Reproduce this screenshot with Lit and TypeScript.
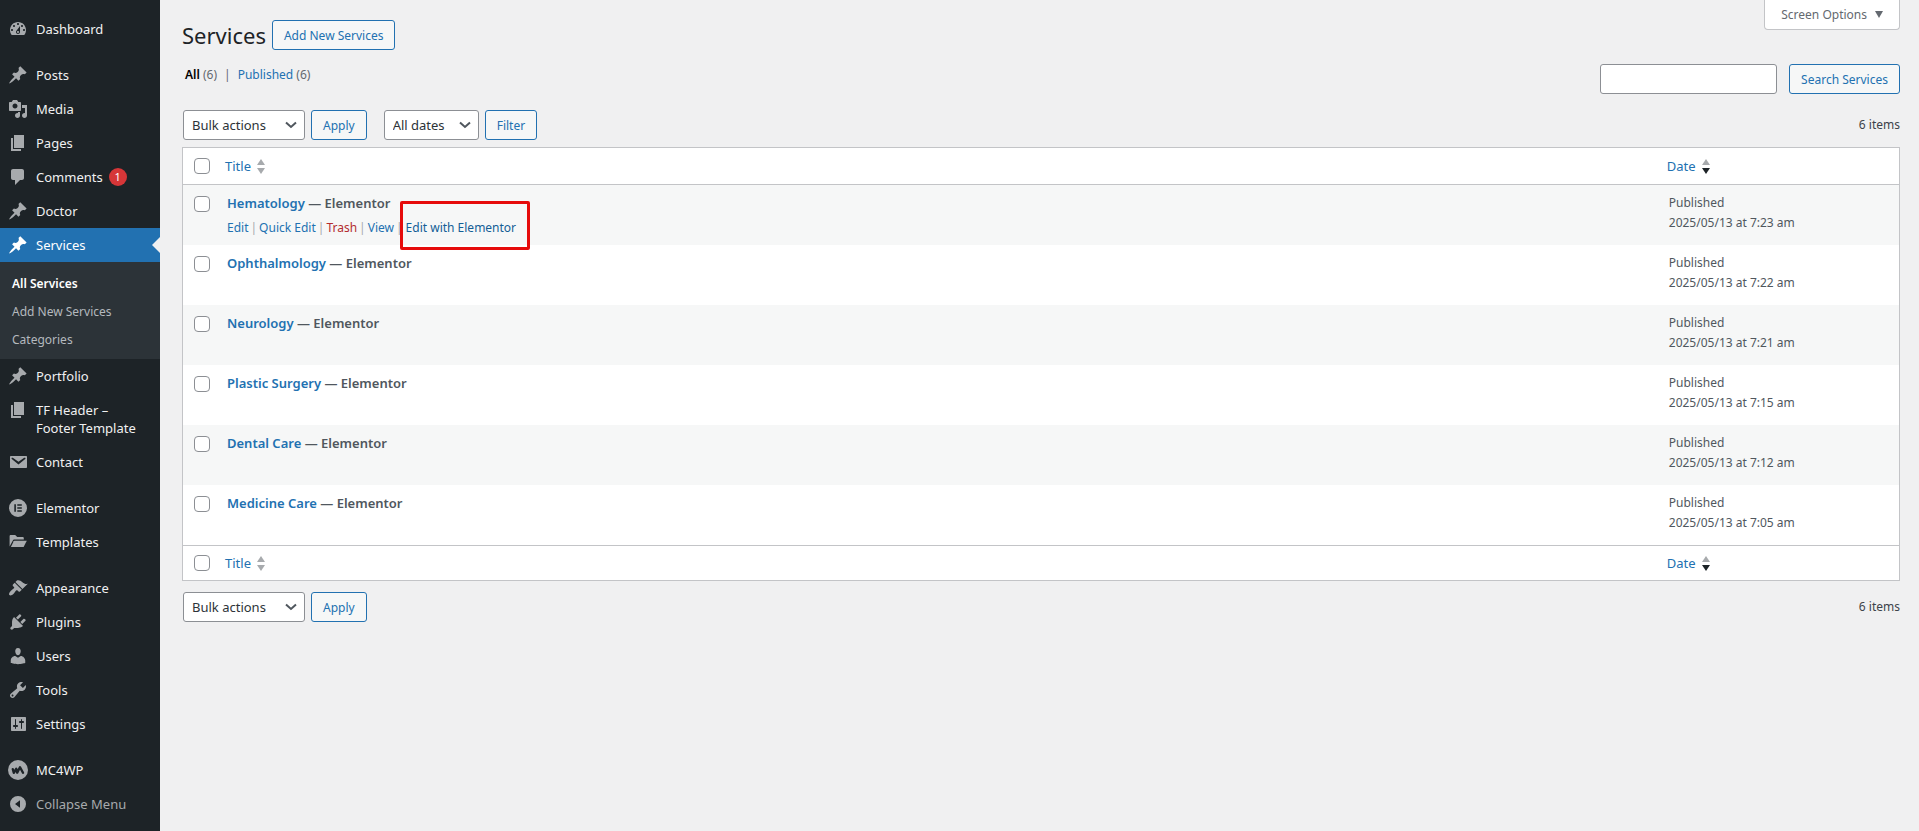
import { LitElement, html, svg, css, nothing } from "lit";
import { customElement } from "lit/decorators.js";
import { classMap } from "lit/directives/class-map.js";

const icons: Record<string, unknown> = {
  dashboard: svg`<path fill-rule="evenodd" d="M3.76 16h12.48c1.1-1.37 1.76-3.11 1.76-5 0-4.42-3.58-8-8-8s-8 3.58-8 8c0 1.89.66 3.63 1.76 5zM10 4c.55 0 1 .45 1 1s-.45 1-1 1-1-.45-1-1 .45-1 1-1zM6 6c.55 0 1 .45 1 1s-.45 1-1 1-1-.45-1-1 .45-1 1-1zm8 0c.55 0 1 .45 1 1s-.45 1-1 1-1-.45-1-1 .45-1 1-1zm-5.37 5.55L12 7v6c0 1.1-.9 2-2 2s-2-.9-2-2c0-.57.24-1.08.63-1.45zM4 10c.55 0 1 .45 1 1s-.45 1-1 1-1-.45-1-1 .45-1 1-1zm12 0c.55 0 1 .45 1 1s-.45 1-1 1-1-.45-1-1 .45-1 1-1zm-5 3c0-.55-.45-1-1-1s-1 .45-1 1 .45 1 1 1 1-.45 1-1z"/>`,
  pin: svg`<path d="M10.44 3.02l1.82-1.82 6.36 6.35-1.83 1.82c-1.05-.68-2.48-.57-3.41.36l-.75.75c-.92.93-1.04 2.35-.35 3.41l-1.83 1.82-2.41-2.41-2.8 2.79c-.42.42-3.38 2.71-3.8 2.29s1.86-3.39 2.28-3.81l2.79-2.79L4.1 9.36l1.83-1.82c1.05.69 2.48.57 3.4-.36l.75-.75c.93-.92 1.05-2.35.36-3.41z"/>`,
  media: svg`<path fill-rule="evenodd" d="M13 11V4c0-.55-.45-1-1-1h-1.67L9 1H5L3.67 3H2c-.55 0-1 .45-1 1v7c0 .55.45 1 1 1h10c.55 0 1-.45 1-1zM7 4.5c1.38 0 2.5 1.12 2.5 2.5S8.38 9.5 7 9.5 4.5 8.38 4.5 7 5.62 4.5 7 4.5zM14 6h5v10.5c0 1.38-1.12 2.5-2.5 2.5S14 17.88 14 16.5s1.12-2.5 2.5-2.5c.17 0 .34.02.5.05V9h-3V6zm-4 8.05V13h2v3.5c0 1.38-1.12 2.5-2.5 2.5S7 17.88 7 16.5 8.12 14 9.5 14c.17 0 .34.02.5.05z"/>`,
  page: svg`<path d="M6 15V2h10v13H6zm-1 1h8v2H3V5h2v11z"/>`,
  comment: svg`<path d="M5 2h9c1.1 0 2 .9 2 2v7c0 1.1-.9 2-2 2h-2l-5 5v-5H5c-1.1 0-2-.9-2-2V4c0-1.1.9-2 2-2z"/>`,
  email: svg`<path fill-rule="evenodd" d="M3 4h15c.6 0 1 .4 1 1v10c0 .6-.4 1-1 1H3c-.6 0-1-.4-1-1V5c0-.6.4-1 1-1zm7.49 8.6l6.74-5.53c.24-.2.43-.66.13-1.07-.29-.41-.82-.42-1.17-.17l-5.7 3.86L4.8 5.83c-.35-.25-.88-.24-1.17.17-.3.41-.11.87.13 1.07z"/>`,
  elementor: svg`<path fill-rule="evenodd" d="M10 1a9 9 0 1 0 0 18 9 9 0 0 0 0-18zM6.3 6.2h1.6v7.6H6.3zM9.3 6.2h4.5v1.6H9.3zM9.3 9.2h4.5v1.6H9.3zM9.3 12.2h4.5v1.6H9.3z"/>`,
  folder: svg`<path d="M1.6 14.5V4.2c0-.7.5-1.2 1.2-1.2h4.4l2 2h5.4c.7 0 1.2.5 1.2 1.2v1.3H6.6c-.9 0-1.5.5-1.9 1.2z"/><path d="M6.5 8.7h12.3L15.6 15H2.9l2.8-5.8c.2-.3.4-.5.8-.5z"/>`,
  brush: svg`<path d="M14.48 11.06L7.41 3.99l1.5-1.5c.5-.56 2.3-.47 3.51.32 1.21.8 1.43 1.28 2.91 2.1 1.18.64 2.45 1.26 4.45.85zm-.71.71L6.7 4.7 4.93 6.47c-.39.39-.39 1.02 0 1.41l1.06 1.06c.39.39.39 1.03 0 1.42-.6.6-1.43 1.11-2.21 1.69-.35.26-.7.53-1.01.84C1.43 14.23.4 16.08 1.4 17.07c.99 1 2.84-.03 4.18-1.36.31-.31.58-.66.85-1.02.57-.78 1.08-1.61 1.69-2.21.39-.39 1.02-.39 1.41 0l1.06 1.06c.39.39 1.02.39 1.41 0z"/>`,
  plugin: svg`<path d="M13.11 4.36L9.87 7.6 8 5.73l3.24-3.24c.35-.34 1.05-.2 1.56.32.52.51.66 1.21.31 1.55zm-8 1.77l.91-1.12 9.01 9.01-1.19.84c-.71.71-2.63 1.16-3.82 1.16H6.14L4.9 17.26c-.59.59-1.54.59-2.12 0-.59-.58-.59-1.53 0-2.12l1.24-1.24v-3.88c0-1.13.4-3.19 1.09-3.89zm7.26 3.97l3.24-3.24c.34-.35 1.04-.21 1.55.31.52.51.66 1.21.31 1.55l-3.24 3.25z"/>`,
  user: svg`<path d="M10 9.25c-2.27 0-2.73-3.44-2.73-3.44C7 4.02 7.82 2 9.97 2c2.16 0 2.98 2.02 2.71 3.81 0 0-.41 3.44-2.68 3.44zm0 2.57L12.72 10c2.39 0 4.52 2.33 4.52 4.53v2.49s-3.65 1.13-7.24 1.13c-3.65 0-7.24-1.13-7.24-1.13v-2.49c0-2.25 1.94-4.48 4.47-4.48z"/>`,
  wrench: svg`<path fill-rule="evenodd" d="M16.68 9.77c-1.34 1.34-3.3 1.67-4.95.99l-5.41 6.52c-.99.99-2.59.99-3.58 0s-.99-2.59 0-3.57l6.52-5.42c-.68-1.65-.35-3.61.99-4.95 1.28-1.28 3.12-1.62 4.72-1.06l-2.89 2.89 2.82 2.82 2.86-2.87c.53 1.58.18 3.39-1.08 4.65zM3.81 16.21c.4.39 1.04.39 1.43 0 .4-.4.4-1.04 0-1.43-.39-.4-1.03-.4-1.43 0-.39.39-.39 1.03 0 1.43z"/>`,
  sliders: svg`<path fill-rule="evenodd" d="M18 16V4c0-.6-.4-1-1-1H4c-.6 0-1 .4-1 1v12c0 .6.4 1 1 1h13c.6 0 1-.4 1-1zM8 11h1c.55 0 1 .45 1 1s-.45 1-1 1H8v1.5c0 .28-.22.5-.5.5s-.5-.22-.5-.5V13H6c-.55 0-1-.45-1-1s.45-1 1-1h1V5.5c0-.28.22-.5.5-.5s.5.22.5.5V11zm5-2h-1c-.55 0-1-.45-1-1s.45-1 1-1h1V5.5c0-.28.22-.5.5-.5s.5.22.5.5V7h1c.55 0 1 .45 1 1s-.45 1-1 1h-1v5.5c0 .28-.22.5-.5.5s-.5-.22-.5-.5V9z"/>`,
  mailchimp: svg`<circle cx="10" cy="10" r="10"/><path d="M4.8 9.2l1 3.6 2.4-4 1 3.8 2.8-5.4 3 5.6" fill="none" stroke="#1d2327" stroke-width="2.4" stroke-linecap="round" stroke-linejoin="round"/>`,
  collapse: svg`<path fill-rule="evenodd" d="M10 2a8 8 0 1 0 0 16 8 8 0 0 0 0-16zM12 6.2v7.6L7 10z"/>`,
};

interface MenuItem {
  label: string;
  icon: string;
  badge?: number;
  current?: boolean;
  children?: string[];
}

const menuGroups: MenuItem[][] = [
  [{ label: "Dashboard", icon: "dashboard" }],
  [
    { label: "Posts", icon: "pin" },
    { label: "Media", icon: "media" },
    { label: "Pages", icon: "page" },
    { label: "Comments", icon: "comment", badge: 1 },
    { label: "Doctor", icon: "pin" },
    {
      label: "Services",
      icon: "pin",
      current: true,
      children: ["All Services", "Add New Services", "Categories"],
    },
    { label: "Portfolio", icon: "pin" },
    { label: "TF Header – Footer Template", icon: "page" },
    { label: "Contact", icon: "email" },
  ],
  [
    { label: "Elementor", icon: "elementor" },
    { label: "Templates", icon: "folder" },
  ],
  [
    { label: "Appearance", icon: "brush" },
    { label: "Plugins", icon: "plugin" },
    { label: "Users", icon: "user" },
    { label: "Tools", icon: "wrench" },
    { label: "Settings", icon: "sliders" },
  ],
  [{ label: "MC4WP", icon: "mailchimp" }],
];

const renderIcon = (name: string) =>
  html`<svg class="icon" viewBox="0 0 20 20" aria-hidden="true">${icons[name]}</svg>`;

@customElement("admin-menu")
export class AdminMenu extends LitElement {
  static styles = css`
    :host {
      display: block;
      flex: 0 0 160px;
      background: #1d2327;
      font-size: 13px;
      line-height: 18px;
    }
    ul {
      list-style: none;
      margin: 0;
      padding: 0;
    }
    .menu {
      display: flex;
      flex-direction: column;
      gap: 12px;
      padding-top: 12px;
    }
    .item {
      display: flex;
      box-sizing: border-box;
      width: 100%;
      padding: 8px 12px 8px 8px;
      gap: 8px;
      border: 0;
      background: none;
      color: #f0f0f1;
      font: inherit;
      text-align: left;
      text-decoration: none;
    }
    .item.current {
      position: relative;
      background: #2271b1;
      color: #fff;
    }
    .item.current::after {
      content: "";
      position: absolute;
      right: 0;
      top: 9px;
      border: 8px solid transparent;
      border-left-width: 0;
      border-right-color: #f0f0f1;
    }
    .item.collapse {
      color: #a7aaad;
    }
    .icon {
      flex: none;
      width: 20px;
      height: 20px;
      margin: -1px 0;
      fill: #a7aaad;
    }
    .current .icon {
      fill: #fff;
    }
    .badge {
      display: inline-block;
      box-sizing: border-box;
      min-width: 18px;
      height: 18px;
      margin-left: 6px;
      border-radius: 9px;
      background: #d63638;
      color: #fff;
      font-size: 11px;
      text-align: center;
      vertical-align: top;
    }
    .submenu {
      padding: 8px 0 5px;
      background: #2c3338;
    }
    .sub {
      display: block;
      padding: 5px 12px;
      color: #b4b9be;
      font-size: 12px;
      text-decoration: none;
    }
    .sub.active {
      color: #fff;
      font-weight: 600;
    }
  `;

  render() {
    return html`<nav class="menu" aria-label="Main menu">
      ${menuGroups.map(
        (group, index) => html`<ul>
          ${group.map((item) => this.renderItem(item))}
          ${index === menuGroups.length - 1
            ? html`<li>
                <button class="item collapse" type="button">
                  ${renderIcon("collapse")}<span>Collapse Menu</span>
                </button>
              </li>`
            : nothing}
        </ul>`
      )}
    </nav>`;
  }

  private renderItem(item: MenuItem) {
    return html`<li>
      <a class=${classMap({ item: true, current: !!item.current })} href="#">
        ${renderIcon(item.icon)}<span
          >${item.label}${item.badge
            ? html`<span class="badge">${item.badge}</span>`
            : nothing}</span
        >
      </a>
      ${item.children
        ? html`<ul class="submenu">
            ${item.children.map(
              (child, i) => html`<li>
                <a class=${classMap({ sub: true, active: i === 0 })} href="#">${child}</a>
              </li>`
            )}
          </ul>`
        : nothing}
    </li>`;
  }
}

const services = [
  { name: "Hematology", time: "7:23 am", actions: true },
  { name: "Ophthalmology", time: "7:22 am" },
  { name: "Neurology", time: "7:21 am" },
  { name: "Plastic Surgery", time: "7:15 am" },
  { name: "Dental Care", time: "7:12 am" },
  { name: "Medicine Care", time: "7:05 am" },
];

@customElement("app-root")
export class AppRoot extends LitElement {
  static styles = css`
    :host {
      display: flex;
      min-height: 100vh;
      background: #f0f0f1;
      color: #3c434a;
      font-family: "Segoe UI", "Noto Sans", "Open Sans", sans-serif;
      font-size: 12px;
      line-height: 20px;
    }
    a {
      color: #2271b1;
      text-decoration: none;
    }
    main {
      flex: 1;
      min-width: 0;
      padding: 0 19px 20px 22px;
    }
    .header,
    .toolbar,
    .tablenav,
    .actions,
    .title,
    .search {
      display: flex;
    }
    .header,
    .toolbar {
      justify-content: space-between;
      align-items: flex-start;
    }
    .title {
      align-items: center;
      gap: 6px;
      padding-top: 20px;
    }
    h1 {
      margin: 0;
      color: #1d2327;
      font-size: 22px;
      font-weight: 400;
      line-height: 30px;
    }
    .button,
    .field,
    .select {
      box-sizing: border-box;
      height: 30px;
      border: 1px solid #8c8f94;
      border-radius: 3px;
      background: #fff;
      font: inherit;
    }
    .button {
      padding: 2px 11px 0;
      border-color: #2271b1;
      background: #f6f7f7;
      color: #2271b1;
      line-height: 26px;
      white-space: nowrap;
    }
    .screen-options {
      display: flex;
      align-items: center;
      gap: 8px;
      height: 30px;
      padding: 0 16px;
      border: 1px solid #c3c4c7;
      border-top: 0;
      border-radius: 0 0 4px 4px;
      background: #fff;
      color: #646970;
      font: inherit;
    }
    .caret {
      width: 8px;
      height: 7px;
      fill: currentColor;
    }
    .toolbar {
      padding: 14px 0 16px;
    }
    .views {
      display: flex;
      gap: 7px;
      margin: 0;
      padding: 1px 3px 0;
      list-style: none;
      color: #646970;
    }
    .views .on {
      color: #000;
      font-weight: 600;
    }
    .search {
      gap: 12px;
    }
    .field {
      width: 177px;
      padding: 0 8px;
    }
    .tablenav {
      justify-content: space-between;
      align-items: center;
      padding-bottom: 7px;
    }
    .tablenav.bottom {
      padding: 11px 0 0;
    }
    .actions {
      gap: 6px;
      padding-left: 1px;
    }
    .select {
      appearance: none;
      padding: 0 26px 0 8px;
      color: #2c3338;
      font-size: 13px;
      background: #fff
        url('data:image/svg+xml,<svg xmlns="http://www.w3.org/2000/svg" width="12" height="8" viewBox="0 0 12 8"><path d="M1 1.5 6 6l5-4.5" fill="none" stroke="%2350575e" stroke-width="2"/></svg>')
        no-repeat right 7px center;
    }
    .bulk {
      width: 122px;
    }
    .dates {
      width: 95px;
      margin-left: 11px;
    }
    .list {
      width: 100%;
      box-sizing: border-box;
      table-layout: fixed;
      border: 1px solid #c3c4c7;
      border-spacing: 0;
      background: #fff;
      color: #50575e;
    }
    .list th,
    .list td {
      box-sizing: border-box;
      padding: 0;
      text-align: left;
      font-weight: 400;
    }
    .check {
      width: 34px;
    }
    .date {
      width: 14%;
    }
    thead th {
      height: 37px;
      border-bottom: 1px solid #c3c4c7;
    }
    tfoot th {
      height: 35px;
      border-top: 1px solid #c3c4c7;
    }
    tbody tr {
      height: 60px;
      vertical-align: top;
    }
    tbody tr:nth-child(odd) {
      background: #f6f7f7;
    }
    .list td.cell {
      padding: 8px 10px 0;
    }
    .list th.pick {
      padding: 0 0 0 11px;
    }
    .box {
      display: block;
      appearance: none;
      box-sizing: border-box;
      width: 16px;
      height: 16px;
      margin: 0;
      border: 1px solid #8c8f94;
      border-radius: 4px;
      background: #fff;
    }
    tbody .box {
      margin-top: 11px;
    }
    .sort {
      display: flex;
      align-items: center;
      gap: 6px;
      padding: 0 8px;
      font-size: 13px;
    }
    .arrows {
      width: 8px;
      height: 15px;
      fill: #a7aaad;
    }
    .arrows .down.active {
      fill: #1d2327;
    }
    .name {
      display: block;
      font-size: 13px;
      font-weight: 600;
    }
    .row-actions {
      display: flex;
      gap: 2px;
      padding-top: 5px;
      color: #a7aaad;
    }
    .trash {
      color: #b32d2e;
    }
    .marked {
      position: relative;
      margin-left: 1px;
      color: #135e96;
    }
    .marked::after {
      content: "";
      position: absolute;
      inset: -17px -14px -12px -6px;
      border: 3px solid #e60b0b;
      border-radius: 2px;
    }
  `;

  render() {
    return html`
      <admin-menu></admin-menu>
      <main>
        <div class="header">
          <div class="title">
            <h1>Services</h1>
            <a class="button" href="#">Add New Services</a>
          </div>
          <button class="screen-options" type="button">
            Screen Options
            <svg class="caret" viewBox="0 0 8 7" aria-hidden="true"><path d="M0 0h8L4 7z" /></svg>
          </button>
        </div>
        <div class="toolbar">
          <ul class="views">
            <li><a class="on" href="#">All</a> (6)</li>
            <li>|</li>
            <li><a href="#">Published</a> (6)</li>
          </ul>
          <form class="search">
            <input class="field" type="search" aria-label="Search Services" />
            <button class="button" type="button">Search Services</button>
          </form>
        </div>
        <div class="tablenav">
          <div class="actions">
            ${this.renderBulk()}
            <select class="select dates" aria-label="Filter by date">
              <option>All dates</option>
            </select>
            <button class="button" type="button">Filter</button>
          </div>
          <span>6 items</span>
        </div>
        <table class="list">
          <thead>
            ${this.renderHeadings()}
          </thead>
          <tbody>
            ${services.map(
              (service) => html`<tr>
                <th class="pick" scope="row">
                  <input class="box" type="checkbox" aria-label="Select ${service.name}" />
                </th>
                <td class="cell">
                  <span class="name"><a href="#">${service.name}</a> — Elementor</span>
                  ${service.actions ? this.renderRowActions() : nothing}
                </td>
                <td class="cell">Published<br />2025/05/13 at ${service.time}</td>
              </tr>`
            )}
          </tbody>
          <tfoot>
            ${this.renderHeadings()}
          </tfoot>
        </table>
        <div class="tablenav bottom">
          <div class="actions">${this.renderBulk()}</div>
          <span>6 items</span>
        </div>
      </main>
    `;
  }

  private renderBulk() {
    return html`<select class="select bulk" aria-label="Select bulk action">
        <option>Bulk actions</option>
      </select>
      <button class="button" type="button">Apply</button>`;
  }

  private renderHeadings() {
    return html`<tr>
      <th class="pick check"><input class="box" type="checkbox" aria-label="Select all" /></th>
      <th scope="col">${this.renderSort("Title", false)}</th>
      <th class="date" scope="col">${this.renderSort("Date", true)}</th>
    </tr>`;
  }

  private renderSort(label: string, active: boolean) {
    return html`<a class="sort" href="#"
      ><span>${label}</span
      ><svg class="arrows" viewBox="0 0 8 15" aria-hidden="true">
        <path d="M4 0l4 6H0z" />
        <path class=${classMap({ down: true, active })} d="M0 9h8l-4 6z" /></svg
    ></a>`;
  }

  private renderRowActions() {
    return html`<div class="row-actions">
      <a href="#">Edit</a><span>|</span><a href="#">Quick Edit</a><span>|</span
      ><a class="trash" href="#">Trash</a><span>|</span><a href="#">View</a><span>|</span
      ><a class="marked" href="#">Edit with Elementor</a>
    </div>`;
  }
}
